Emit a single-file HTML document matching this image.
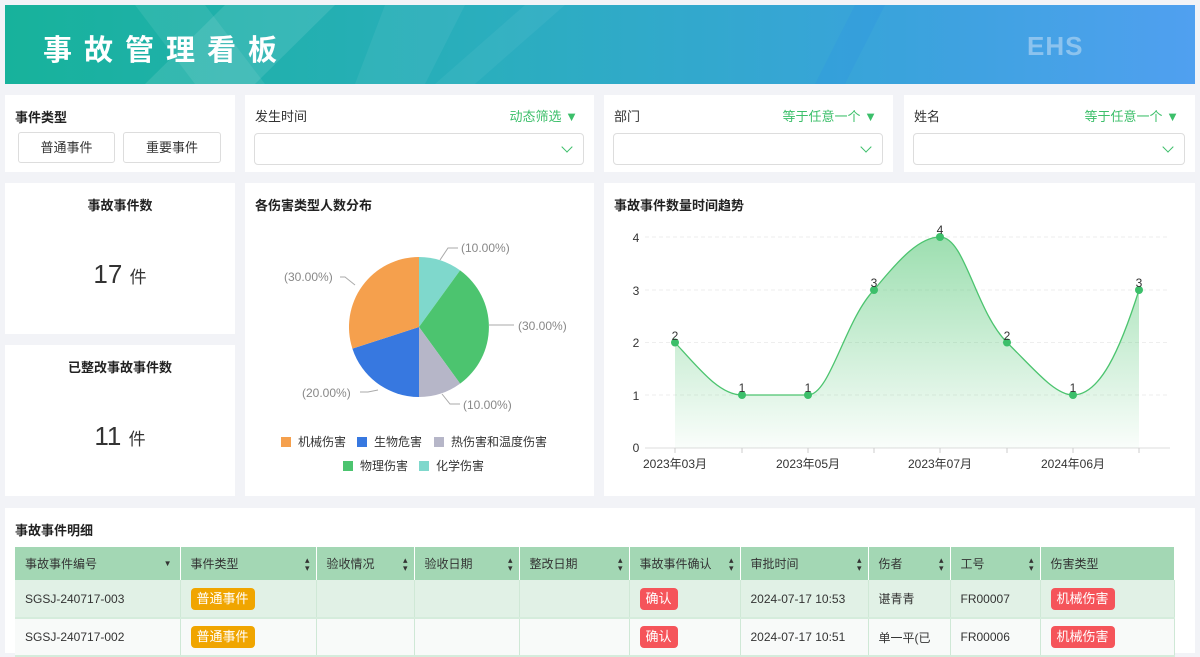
<!DOCTYPE html>
<html><head><meta charset="utf-8"><style>
*{box-sizing:border-box;margin:0;padding:0}
body{width:1200px;height:653px;overflow:hidden;background:#f2f3f7;font-family:"Liberation Sans","Noto Sans CJK SC",sans-serif;color:#333;position:relative}
.p{position:absolute;background:#fff}
.hdr{position:absolute;left:5px;top:5px;width:1190px;height:79px;background:linear-gradient(90deg,#17b29b 0%,#2aaebd 40%,#3aa3dc 75%,#50a0f0 100%);overflow:hidden}
.hdr h1{position:absolute;left:38px;top:22px;color:#fff;font-size:29px;letter-spacing:12px;font-weight:bold}
.ehs{position:absolute;left:1022px;top:26px;font-size:26px;font-weight:bold;color:#8cc3ee;letter-spacing:1px}
.t{font-size:13px;font-weight:bold;color:#222}
.lbl{font-size:13px;color:#333}
.g{color:#3cbf6a;font-size:13px;position:absolute}
.sel{position:absolute;height:32px;border:1px solid #ddd;border-radius:4px;background:#fff}
.sel:after{content:"";position:absolute;right:12px;top:9px;width:7px;height:7px;border-right:1.3px solid #3cbf6a;border-bottom:1.3px solid #3cbf6a;transform:rotate(45deg)}
.btn{position:absolute;top:132px;height:31px;border:1px solid #ddd;border-radius:3px;font-size:13px;text-align:center;line-height:29px;color:#333}
table{border-collapse:collapse;font-size:12px;position:absolute;left:15px;top:547px;width:1160px}
th{background:#a3d7b4;height:33px;text-align:left;font-weight:normal;padding-left:10px;border-right:1px solid #fff;color:#333;position:relative}
td{height:38px;padding-left:10px;border-right:1px solid #cfe8d6;border-bottom:2px solid #d5ecdc;color:#333}
tr.r1 td{background:#e1f1e6}
tr.r2 td{background:#f8faf9}
.s:after{content:"▴\A▾";white-space:pre;position:absolute;right:6px;top:9px;font-size:9px;line-height:8px;color:#333}
.tag{display:inline-block;color:#fff;font-size:13px;padding:0 6px;height:22px;line-height:22px;border-radius:4px}
.y{background:#f0a500}.rd{background:#f5545a}
</style></head><body>
<div class="hdr">
<svg width="1190" height="79" style="position:absolute;left:0;top:0"><polygon points="130,0 200,0 260,79 190,79" fill="#fff" opacity=".08"/><polygon points="220,0 330,0 250,79 140,79" fill="#fff" opacity=".1"/><polygon points="380,0 460,0 420,79 350,79" fill="#fff" opacity=".06"/><polygon points="520,0 560,0 470,79 430,79" fill="#fff" opacity=".05"/><polygon points="850,0 880,0 840,79 810,79" fill="#2f95e0" opacity=".3"/></svg>
<h1>事故管理看板</h1><div class="ehs">EHS</div></div>

<div class="p" style="left:5px;top:95px;width:230px;height:77px"><div class="t" style="position:absolute;left:10px;top:12px">事件类型</div></div>
<div class="btn" style="left:18px;width:97px">普通事件</div><div class="btn" style="left:123px;width:98px">重要事件</div>

<div class="p" style="left:245px;top:95px;width:349px;height:77px"><div class="lbl" style="position:absolute;left:10px;top:11px">发生时间</div><div class="g" style="right:16px;top:11px">动态筛选 ▼</div><div class="sel" style="left:9px;top:38px;width:330px"></div></div>
<div class="p" style="left:604px;top:95px;width:289px;height:77px"><div class="lbl" style="position:absolute;left:10px;top:11px">部门</div><div class="g" style="right:16px;top:11px">等于任意一个 ▼</div><div class="sel" style="left:9px;top:38px;width:270px"></div></div>
<div class="p" style="left:904px;top:95px;width:291px;height:77px"><div class="lbl" style="position:absolute;left:10px;top:11px">姓名</div><div class="g" style="right:16px;top:11px">等于任意一个 ▼</div><div class="sel" style="left:9px;top:38px;width:272px"></div></div>

<div class="p" style="left:5px;top:183px;width:230px;height:151px;text-align:center"><div class="t" style="margin-top:12px">事故事件数</div><div style="margin-top:45px;font-size:26px">17 <span style="font-size:17px">件</span></div></div>
<div class="p" style="left:5px;top:345px;width:230px;height:151px;text-align:center"><div class="t" style="margin-top:12px">已整改事故事件数</div><div style="margin-top:45px;font-size:26px">11 <span style="font-size:17px">件</span></div></div>

<div class="p" style="left:245px;top:183px;width:349px;height:313px"><div class="t" style="position:absolute;left:10px;top:12px">各伤害类型人数分布</div></div>
<svg width="1200" height="653" style="position:absolute;left:0;top:0" font-family="Liberation Sans,Noto Sans CJK SC,sans-serif">
<path d="M419,327 L419,257 A70,70 0 0 1 460.1,270.4Z" fill="#7fd8cc"/>
<path d="M419,327 L460.1,270.4 A70,70 0 0 1 460.1,383.6Z" fill="#4cc46f"/>
<path d="M419,327 L460.1,383.6 A70,70 0 0 1 419,397Z" fill="#b6b6c8"/>
<path d="M419,327 L419,397 A70,70 0 0 1 352.4,348.6Z" fill="#3778e0"/>
<path d="M419,327 L352.4,348.6 A70,70 0 0 1 419,257Z" fill="#f5a04d"/>
<g stroke="#aaa" fill="none"><path d="M440,260 L448,248 L458,248"/><path d="M489,325 L514,325"/><path d="M442,394 L450,404 L460,404"/><path d="M378,390 L368,392 L360,392"/><path d="M355,285 L345,277 L340,277"/></g>
<g font-size="12" fill="#888"><text x="461" y="252">(10.00%)</text><text x="518" y="330">(30.00%)</text><text x="463" y="409">(10.00%)</text><text x="302" y="397">(20.00%)</text><text x="284" y="281">(30.00%)</text></g>
<g font-size="12" fill="#333"><rect x="281" y="437" width="10" height="10" fill="#f5a04d"/><text x="298" y="446">机械伤害</text><rect x="357" y="437" width="10" height="10" fill="#3778e0"/><text x="374" y="446">生物危害</text><rect x="434" y="437" width="10" height="10" fill="#b6b6c8"/><text x="451" y="446">热伤害和温度伤害</text><rect x="343" y="461" width="10" height="10" fill="#4cc46f"/><text x="360" y="470">物理伤害</text><rect x="419" y="461" width="10" height="10" fill="#7fd8cc"/><text x="436" y="470">化学伤害</text></g>
</svg>

<div class="p" style="left:604px;top:183px;width:591px;height:313px"><div class="t" style="position:absolute;left:10px;top:12px">事故事件数量时间趋势</div></div>
<svg width="1200" height="653" style="position:absolute;left:0;top:0" font-family="Liberation Sans,Noto Sans CJK SC,sans-serif">
<defs><linearGradient id="gr" x1="0" y1="0" x2="0" y2="1"><stop offset="0" stop-color="#4cc46f" stop-opacity=".55"/><stop offset="1" stop-color="#4cc46f" stop-opacity=".03"/></linearGradient></defs>
<g stroke="#eee" stroke-dasharray="4 3"><line x1="645" y1="237" x2="1170" y2="237"/><line x1="645" y1="290" x2="1170" y2="290"/><line x1="645" y1="342.5" x2="1170" y2="342.5"/><line x1="645" y1="395" x2="1170" y2="395"/></g>
<line x1="645" y1="448" x2="1170" y2="448" stroke="#ddd"/>
<g stroke="#ccc"><line x1="675" y1="448" x2="675" y2="453"/><line x1="742" y1="448" x2="742" y2="453"/><line x1="808" y1="448" x2="808" y2="453"/><line x1="874" y1="448" x2="874" y2="453"/><line x1="940" y1="448" x2="940" y2="453"/><line x1="1007" y1="448" x2="1007" y2="453"/><line x1="1073" y1="448" x2="1073" y2="453"/><line x1="1139" y1="448" x2="1139" y2="453"/></g>
<path d="M675,342.5 C700,370 720,395 742,395 L808,395 C830,395 845,320 874,290 C900,258 920,237 940,237 C965,237 975,310 1007,342.5 C1035,370 1055,395 1073,395 C1100,395 1120,350 1139,290" fill="none" stroke="#4cc46f" stroke-width="1.3"/>
<path d="M675,342.5 C700,370 720,395 742,395 L808,395 C830,395 845,320 874,290 C900,258 920,237 940,237 C965,237 975,310 1007,342.5 C1035,370 1055,395 1073,395 C1100,395 1120,350 1139,290 L1139,448 L675,448Z" fill="url(#gr)"/>
<g fill="#3cbf6a"><circle cx="675" cy="342.5" r="4"/><circle cx="742" cy="395" r="4"/><circle cx="808" cy="395" r="4"/><circle cx="874" cy="290" r="4"/><circle cx="940" cy="237" r="4"/><circle cx="1007" cy="342.5" r="4"/><circle cx="1073" cy="395" r="4"/><circle cx="1139" cy="290" r="4"/></g>
<g font-size="12" fill="#333" text-anchor="middle"><text x="675" y="340">2</text><text x="742" y="392">1</text><text x="808" y="392">1</text><text x="874" y="287">3</text><text x="940" y="234">4</text><text x="1007" y="340">2</text><text x="1073" y="392">1</text><text x="1139" y="287">3</text>
<text x="636" y="242">4</text><text x="636" y="295">3</text><text x="636" y="347">2</text><text x="636" y="400">1</text><text x="636" y="452">0</text>
<text x="675" y="468">2023年03月</text><text x="808" y="468">2023年05月</text><text x="940" y="468">2023年07月</text><text x="1073" y="468">2024年06月</text></g>
</svg>

<div class="p" style="left:5px;top:508px;width:1190px;height:145px"><div class="t" style="position:absolute;left:10px;top:12px">事故事件明细</div></div>
<table>
<tr><th style="width:165px">事故事件编号<span style="position:absolute;right:8px;top:12px;font-size:8px">▼</span></th><th class="s" style="width:136px">事件类型</th><th class="s" style="width:98px">验收情况</th><th class="s" style="width:105px">验收日期</th><th class="s" style="width:110px">整改日期</th><th class="s" style="width:111px">事故事件确认</th><th class="s" style="width:128px">审批时间</th><th class="s" style="width:82px">伤者</th><th class="s" style="width:90px">工号</th><th>伤害类型</th></tr>
<tr class="r1"><td>SGSJ-240717-003</td><td><span class="tag y">普通事件</span></td><td></td><td></td><td></td><td><span class="tag rd">确认</span></td><td>2024-07-17 10:53</td><td>谌青青</td><td>FR00007</td><td><span class="tag rd">机械伤害</span></td></tr>
<tr class="r2"><td>SGSJ-240717-002</td><td><span class="tag y">普通事件</span></td><td></td><td></td><td></td><td><span class="tag rd">确认</span></td><td>2024-07-17 10:51</td><td>单一平(已</td><td>FR00006</td><td><span class="tag rd">机械伤害</span></td></tr>
</table>
</body></html>
